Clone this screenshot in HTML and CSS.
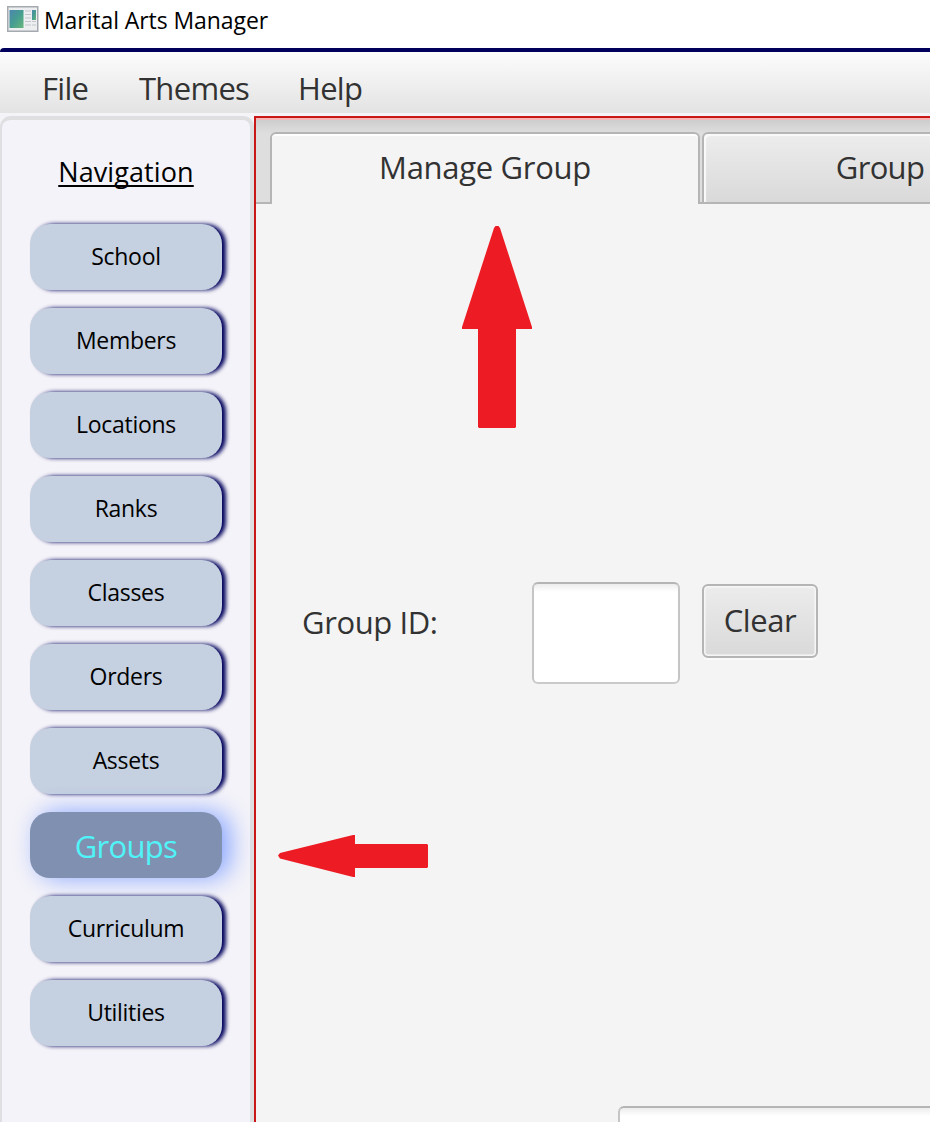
FILE: index.html
```html
<!DOCTYPE html>
<html lang="en">
<head>
<meta charset="utf-8">
<title>Marital Arts Manager</title>
<link rel="stylesheet" href="styles.css">
</head>
<body>
<div class="window">
  <header class="titlebar">
    <svg class="app-icon" width="32" height="26" viewBox="0 0 32 26">
      <defs>
        <linearGradient id="pane" x1="0" y1="0" x2="1" y2="1">
          <stop offset="0" stop-color="#4b86ad"/><stop offset=".5" stop-color="#469d91"/><stop offset="1" stop-color="#67b779"/>
        </linearGradient>
      </defs>
      <rect x=".75" y=".75" width="30" height="24.5" fill="#eceef0" stroke="#a4aab0" stroke-width="1.5"/>
      <rect x="2.5" y="4" width="14" height="18" fill="url(#pane)"/>
      <path d="M18 5h6M18 8.500h6M18 12h6M18 15.500h6M18 19h6M25 15.500h4M25 19h4" stroke="#c3c7cb" stroke-width="1"/>
      <rect x="25" y="4" width="4" height="10" fill="url(#pane)"/>
    </svg>
    <span class="title">Marital Arts Manager</span>
  </header>
  <nav class="menubar">
    <span class="menu-file">File</span>
    <span class="menu-themes">Themes</span>
    <span class="menu-help">Help</span>
  </nav>
  <div class="workspace">
    <aside class="sidebar">
      <h1 class="nav-title">Navigation</h1>
      <div class="nav-list">
        <button class="nav-btn">School</button>
        <button class="nav-btn">Members</button>
        <button class="nav-btn">Locations</button>
        <button class="nav-btn">Ranks</button>
        <button class="nav-btn">Classes</button>
        <button class="nav-btn">Orders</button>
        <button class="nav-btn">Assets</button>
        <button class="nav-btn active">Groups</button>
        <button class="nav-btn">Curriculum</button>
        <button class="nav-btn">Utilities</button>
      </div>
    </aside>
    <main class="content">
      <div class="tabs">
        <div class="tab-lead"></div>
        <div class="tab selected"><span>Manage Group</span></div>
        <div class="tab-gap"></div>
        <div class="tab other"><span>Group</span></div>
      </div>
      <section class="form">
        <div class="id-row">
          <label class="label">Group ID:</label>
          <div class="field"></div>
          <button class="clear">Clear</button>
        </div>
        <div class="field next-field"></div>
      </section>
    </main>
  </div>
  <svg class="arrow arrow-up" width="70" height="202" viewBox="0 0 70 202"><path d="M33.500 0h3L38 2 70 101v2H54v98l-1 1H17l-1-1v-98H0v-2L32 2z"/></svg>
  <svg class="arrow arrow-left" width="150" height="42" viewBox="0 0 150 42"><path d="M0 20.500 2 18 75 0h2v9h72l1 1v22l-1 1H77v9h-2L2 23.500z"/></svg>
</div>
</body>
</html>
```
FILE: styles.css
```css
* { box-sizing: border-box; }
body { margin: 0; font-family: "Open Sans", "Noto Sans", sans-serif; }
button { font-family: inherit; padding: 0; border: 0; }
.window { position: relative; width: 930px; height: 1122px; overflow: hidden; background: #fff; display: flex; flex-direction: column; }
.titlebar { height: 48px; padding: 6px 0 0 7px; display: flex; gap: 5px; align-items: flex-start; flex: none; }
.app-icon { display: block; }
.title { font-size: 23px; line-height: 28px; color: #000; letter-spacing: -0.08px; white-space: nowrap; }
.menubar { height: 65px; flex: none; border-top: 4px solid #00005c; border-top-left-radius: 4px; background: linear-gradient(#fcfcfc, #e3e3e3); display: flex; padding: 15px 0 0 42px; font-size: 31px; line-height: 42px; color: #323232; white-space: nowrap; letter-spacing: -0.7px; }
.menu-file { width: 97px; }
.menu-themes { width: 159px; }
.workspace { flex: 1; display: flex; padding-top: 3px; background: #f4f3f8; min-height: 0; }
.sidebar { width: 254px; flex: none; border: solid #dfdfe2; border-width: 4px 4px 0 2px; border-radius: 11px 11px 0 0; background: #f4f3f9; }
.nav-title { margin: 33px 0 0 -2px; height: 40px; padding-left: 2px; text-align: center; font-size: 27px; line-height: 38px; font-weight: 400; text-decoration: underline; text-decoration-thickness: 2px; text-underline-offset: 3px; text-decoration-skip-ink: none; letter-spacing: 0.1px; }
.nav-list { display: flex; flex-direction: column; gap: 18px; padding: 31px 0 0 28px; }
.nav-btn { width: 192px; height: 66px; border-radius: 20px; background: #c5d0e0; color: #000; font-size: 23px; padding-bottom: 2px; box-shadow: 4px 0 4px #00005c; letter-spacing: -0.3px; }
.nav-btn.active { background: #8090b0; color: #50f4f8; font-size: 31px; padding: 2px 0 0; box-shadow: 8px 0 24px #87a5ff; letter-spacing: -0.7px; }
.content { flex: 1; min-width: 0; border: solid #c91616; border-width: 2px 0 0 2px; background: #f4f4f4; display: flex; flex-direction: column; }
.tabs { height: 86px; flex: none; display: flex; padding-top: 14px; background: linear-gradient(#f7b7b7 0, #f7b7b7 2px, #cdcdcd 2px, #dedede 15px); font-size: 31px; color: #323232; letter-spacing: -0.3px; }
.tab-lead, .tab-gap { flex: none; border-bottom: 2px solid #b5b5b5; }
.tab-lead { width: 14px; }
.tab-gap { width: 2px; }
.tab { flex: none; border: 2px solid #b5b5b5; border-radius: 6px 6px 0 0; line-height: 66px; text-align: center; white-space: nowrap; box-shadow: inset 0 2px #fff; }
.tab.selected { width: 430px; border-bottom: 0; background: #f4f4f4; }
.tab.other { width: 356px; letter-spacing: -0.7px; background: linear-gradient(#ededed, #d9d9d9); box-shadow: inset 2px 2px 1px #fafafa; }
.form { flex: 1; padding: 378px 0 0 46px; }
.id-row { display: flex; align-items: flex-start; height: 104px; }
.label { width: 230px; font-size: 31px; line-height: 42px; padding-top: 19px; color: #323232; white-space: nowrap; letter-spacing: -0.4px; }
.field { width: 148px; height: 102px; border: 2px solid; border-color: #b5b5b5 #c5c5c5 #cacaca; border-radius: 6px; background: linear-gradient(#ededed, #fff 8px); }
.clear { margin: 2px 0 0 22px; width: 116px; height: 74px; border: 2px solid #b5b5b5; border-radius: 6px; background: linear-gradient(#ececec, #d9d9d9); box-shadow: inset 0 0 1px 1.500px #f7f7f7, 0 2px #fafafa; font-size: 31px; padding-bottom: 2px; color: #323232; letter-spacing: -0.4px; }
.next-field { margin: 420px 0 0 316px; width: 360px; }
.arrow { position: absolute; fill: #ed1c24; }
.arrow-up { left: 462px; top: 226px; }
.arrow-left { left: 278px; top: 835px; }
```
